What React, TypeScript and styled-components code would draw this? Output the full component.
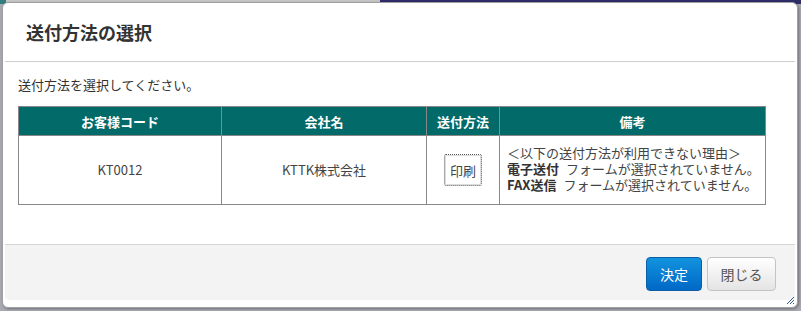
import styled, { createGlobalStyle } from "styled-components";

const GlobalStyle = createGlobalStyle`
    html, body {
        margin: 0;
        padding: 0;
    }
    body {
        font-family: "Noto Sans CJK JP", "Noto Sans", sans-serif;
        color: #333;
    }
`;

const Page = styled.div`
    position: relative;
    width: 801px;
    height: 311px;
    overflow: hidden;
    background: #a9abb3;
`;

const TopStrip = styled.div`
    height: 4px;
    background: linear-gradient(to right, #2f7f7f 0 6px, #c8c8c8 6px 380px, #2e2d6a 380px);
`;

// jQuery UI 風のモーダル本体
const Dialog = styled.div`
    position: absolute;
    left: 2px;
    top: 2px;
    width: 796px;
    height: 306px;
    box-sizing: border-box;
    display: flex;
    flex-direction: column;
    padding: 0 2px 7px 2px;
    background: #fff;
    border: 1px solid #a0a0a0;
    border-radius: 6px;
    box-shadow: 1px 1px 3px rgba(0, 0, 0, 0.35);
`;

const TitleBar = styled.div`
    height: 58px;
    display: flex;
    align-items: center;
    padding-left: 21px;
    border-bottom: 1px solid #cfcfcf;
`;

const Title = styled.h2`
    margin: 0;
    font-size: 18px;
    font-weight: bold;
    color: #333;
`;

const Content = styled.div`
    flex: 1;
    padding: 14px 0 0 13px;
`;

const Lead = styled.p`
    margin: 0;
    font-size: 13px;
    line-height: 18px;
`;

const Table = styled.table`
    margin-top: 12px;
    width: 743px;
    border-collapse: collapse;
    table-layout: fixed;
    font-size: 13px;
`;

const Th = styled.th<{ $w: number }>`
    width: ${p => p.$w}px;
    height: 28px;
    padding: 0;
    background: #036a6a;
    color: #fff;
    font-weight: bold;
    text-align: center;
    border: 1px solid #888;
`;

const Td = styled.td<{ $left?: boolean }>`
    height: 66px;
    padding: ${p => (p.$left ? "0 0 2px 7px" : "0")};
    text-align: ${p => (p.$left ? "left" : "center")};
    vertical-align: middle;
    border: 1px solid #888;
    color: #444;
    line-height: 16px;
`;

const SmallButton = styled.button`
    width: 38px;
    height: 32px;
    padding: 0;
    font-family: inherit;
    font-size: 13px;
    color: #444;
    background: #fff;
    border: 1px dotted #555;
    border-radius: 2px;
    box-shadow: inset 0 0 0 1px #ddd;
`;

const Note = styled.div`
    white-space: nowrap;
`;

const Label = styled.b`
    color: #333;
    margin-right: 7px;
`;

const Footer = styled.div`
    height: 56px;
    display: flex;
    justify-content: flex-end;
    align-items: flex-start;
    gap: 5px;
    padding: 12px 19px 0 0;
    box-sizing: border-box;
    background: #f3f3f3;
    border-top: 1px solid #d6d6d6;
    border-radius: 0 0 4px 4px;
`;

const Button = styled.button<{ $primary?: boolean }>`
    height: 34px;
    padding: 0;
    width: ${p => (p.$primary ? "56px" : "69px")};
    font-family: inherit;
    font-size: 14px;
    border-radius: 4px;
    color: ${p => (p.$primary ? "#fff" : "#555")};
    background: ${p =>
        p.$primary
            ? "linear-gradient(#1293de, #0068c6)"
            : "linear-gradient(#ffffff, #e4e4e4)"};
    border: 1px solid ${p => (p.$primary ? "#0a5ea8" : "#c4c4c4")};
`;

const Grip = styled.svg`
    position: absolute;
    right: 2px;
    bottom: 2px;
`;

export default function App() {
    return (
        <Page>
            <GlobalStyle />
            <TopStrip />
            <Dialog>
                <TitleBar>
                    <Title>送付方法の選択</Title>
                </TitleBar>
                <Content>
                    <Lead>送付方法を選択してください。</Lead>
                    <Table>
                        <thead>
                            <tr>
                                <Th $w={202}>お客様コード</Th>
                                <Th $w={204}>会社名</Th>
                                <Th $w={72}>送付方法</Th>
                                <Th $w={265}>備考</Th>
                            </tr>
                        </thead>
                        <tbody>
                            <tr>
                                <Td>KT0012</Td>
                                <Td>KTTK株式会社</Td>
                                <Td>
                                    <SmallButton>印刷</SmallButton>
                                </Td>
                                <Td $left>
                                    <Note>＜以下の送付方法が利用できない理由＞</Note>
                                    <Note>
                                        <Label>電子送付</Label>フォームが選択されていません。
                                    </Note>
                                    <Note>
                                        <Label>FAX送信</Label>フォームが選択されていません。
                                    </Note>
                                </Td>
                            </tr>
                        </tbody>
                    </Table>
                </Content>
                <Footer>
                    <Button $primary>決定</Button>
                    <Button>閉じる</Button>
                </Footer>
                <Grip width="9" height="9" viewBox="0 0 9 9">
                    <path d="M8 1 L1 8 M8 4 L4 8 M8 7 L7 8" stroke="#2d5f8a" strokeWidth="1" />
                </Grip>
            </Dialog>
        </Page>
    );
}
